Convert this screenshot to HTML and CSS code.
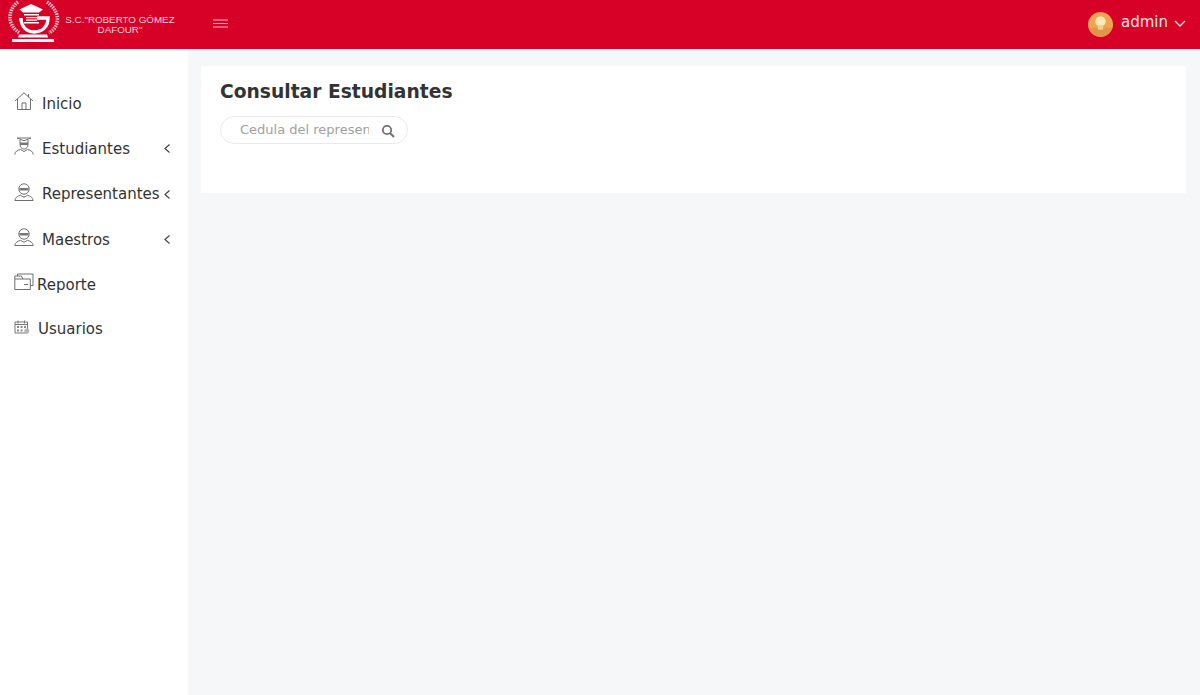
FILE: index.html
```html
<!DOCTYPE html>
<html lang="es">
<head>
<meta charset="utf-8">
<title>Consultar Estudiantes</title>
<link rel="stylesheet" href="styles.css">
</head>
<body>
<header class="topbar">
  <div class="brand">
    <svg class="logo" viewBox="7 0 54 44" width="54" height="44" aria-hidden="true">
      <g fill="none" stroke="#f0c4cc" stroke-width="3.600" stroke-dasharray="1.500 1">
        <path d="M18 2C8 9 6 25 20 33"/>
        <path d="M47 2C59 10 62 25 49 33"/>
      </g>
      <path fill="#fff" d="M31 4 43 9.500 39 12.500H23L19.500 9.500z"/>
      <path fill="#fff" d="M24 14h15v1.500H24zM26 17h11v1.300H26zM26 19.500h11v1.300H26zM24 22h15v1.500H24z"/>
      <path fill="none" stroke="#fff" stroke-width="3.400" d="M21 18C21 27 27 32 34 32 42 32 48 27 48 18H37"/>
      <path fill="#fff" d="M19 34.500H47L48 37.500H18zM12 39H54V42H12z"/>
    </svg>
    <div class="brand-name">S.C."ROBERTO GÓMEZ<br>DAFOUR"</div>
    <svg class="burger" viewBox="0 0 15 9" width="15" height="9" aria-hidden="true">
      <path d="M0 1h15M0 4.500h15M0 8h15" stroke="#f4b5c0" stroke-width="1" fill="none"/>
    </svg>
  </div>
  <div class="user">
    <svg class="avatar" viewBox="0 0 24 24" width="25" height="25" aria-hidden="true">
      <circle cx="12" cy="12" r="12" fill="#f0a552"/>
      <path d="M0.500 15h23A12 12 0 0 1 .5 15z" fill="#e8934a"/>
      <circle cx="12" cy="9" r="5" fill="#fbeab4"/>
      <rect x="9.500" y="12.500" width="5" height="4.500" fill="#f2d08e"/>
    </svg>
    <span class="user-name">admin</span>
    <svg class="caret" viewBox="0 0 12 7" width="12" height="7" aria-hidden="true">
      <path d="M1 1l5 5 5-5" fill="none" stroke="#fbdde2" stroke-width="1.300"/>
    </svg>
  </div>
</header>
<div class="body-row">
  <nav class="sidebar">
    <a class="nav-item">
      <svg class="nav-icon" viewBox="0 0 20 18" aria-hidden="true"><path d="M1 9 10 .8 19 9M3.500 7V17.500h13V7M8 17.500V11h4v6.500M14.500 2v3.200" fill="none" stroke="#6f6f6f" stroke-width="1"/></svg>
      <span class="nav-label">Inicio</span>
    </a>
    <a class="nav-item">
      <svg class="nav-icon" viewBox="0 0 20 18" aria-hidden="true"><path d="M3 1h14l-7 2.800zM6 3v4.500c0 3 2 4.500 4 4.500s4-1.500 4-4.500V3M.8 17.500c0-3 3-4.500 5.700-5l3.500 2 3.500-2c2.700.5 5.700 2 5.700 5" fill="none" stroke="#707070" stroke-width="1"/><path d="M6 5.500h8v2.500H6z" fill="#777"/></svg>
      <span class="nav-label">Estudiantes</span>
      <svg class="chev" viewBox="0 0 6 9" aria-hidden="true"><path d="M5.500.5 1 4.500l4.500 4" fill="none" stroke="#444" stroke-width="1.200"/></svg>
    </a>
    <a class="nav-item">
      <svg class="nav-icon" viewBox="0 0 20 18" aria-hidden="true"><circle cx="10" cy="6" r="5.200" fill="none" stroke="#707070"/><path d="M.8 17.500c.3-3 3-4.500 5.700-5.200l3.500 2 3.500-2c2.700.7 5.400 2.200 5.700 5.200z" fill="none" stroke="#707070"/><path d="M5.500 5h9v2.500h-9z" fill="#777"/></svg>
      <span class="nav-label">Representantes</span>
      <svg class="chev" viewBox="0 0 6 9" aria-hidden="true"><path d="M5.500.5 1 4.500l4.500 4" fill="none" stroke="#444" stroke-width="1.200"/></svg>
    </a>
    <a class="nav-item">
      <svg class="nav-icon" viewBox="0 0 20 18" aria-hidden="true"><circle cx="10" cy="6" r="5.200" fill="none" stroke="#707070"/><path d="M.8 17.500c.3-3 3-4.500 5.700-5.200l3.500 2 3.500-2c2.700.7 5.400 2.200 5.700 5.200z" fill="none" stroke="#707070"/><path d="M5.500 5h9v2.500h-9z" fill="#777"/></svg>
      <span class="nav-label">Maestros</span>
      <svg class="chev" viewBox="0 0 6 9" aria-hidden="true"><path d="M5.500.5 1 4.500l4.500 4" fill="none" stroke="#444" stroke-width="1.200"/></svg>
    </a>
    <a class="nav-item nav-tight">
      <svg class="nav-icon" viewBox="0 0 20 18" aria-hidden="true"><path d="M.8 16.500V6h15.500v10.500zM.8 6V3h6.500l1.500 3M3.500 3V1H19v11.500h-2.700M10 11.500h4" fill="none" stroke="#6f6f6f"/></svg>
      <span class="nav-label">Reporte</span>
    </a>
    <a class="nav-item nav-users">
      <svg class="nav-icon nav-icon-small" viewBox="0 0 16 14" aria-hidden="true"><path d="M1 2h12.500v11H1zM1 4.500h12.500M4 .5v3M10.500.5v3" fill="none" stroke="#777"/><path d="M3 6h2v2H3zM6.500 6h2v2h-2zM10 6h2v2h-2zM3 9.500h2v2H3zM6.500 9.500h2v2h-2z" fill="#8a8a8a"/><circle cx="12.800" cy="11" r="2.500" fill="#b5b5b5"/></svg>
      <span class="nav-label">Usuarios</span>
    </a>
  </nav>
  <main class="content">
    <section class="card">
      <h1 class="title">Consultar Estudiantes</h1>
      <div class="search">
        <input class="search-input" type="text" placeholder="Cedula del representante">
        <svg class="search-icon" viewBox="0 0 14 14" width="14" height="14" aria-hidden="true"><circle cx="6" cy="6" r="4.200" fill="none" stroke="#707070" stroke-width="1.800"/><path d="M9 9l4 4" stroke="#707070" stroke-width="2"/></svg>
      </div>
    </section>
  </main>
</div>
</body>
</html>
```
FILE: styles.css
```css
* { box-sizing: border-box; }
html, body { margin: 0; height: 100%; overflow: hidden; }
body {
  font-family: "DejaVu Sans", sans-serif;
  background: #f6f7f9;
  color: #333;
  display: flex;
  flex-direction: column;
  height: 695px;
}
.topbar {
  height: 49px;
  flex: none;
  background: #d70026;
  display: flex;
  align-items: center;
  justify-content: space-between;
  padding: 0 14px 0 7px;
}
.brand { display: flex; align-items: center; height: 100%; }
.logo { flex: none; margin-bottom: 5px; }
.brand-name {
  font-family: "Liberation Sans", sans-serif;
  font-size: 9.800px;
  line-height: 9.500px;
  color: #f7d5db;
  text-align: center;
  width: 112px;
  margin-left: 3px;
  white-space: nowrap;
}
.burger { margin-left: 37px; margin-bottom: 3px; flex: none; }
.user { display: flex; align-items: center; margin-bottom: 4px; }
.avatar { flex: none; margin-top: 4px; }
.user-name { font-size: 15px; color: #fde3e7; margin-left: 8px; margin-top: -2px; }
.caret { margin-left: 6px; margin-top: 2px; }
.body-row { flex: 1; display: flex; min-height: 0; }
.sidebar {
  width: 188px;
  flex: none;
  background: #fff;
  padding-top: 32px;
  display: flex;
  flex-direction: column;
}
.nav-item {
  height: 45.300px;
  display: flex;
  align-items: center;
  padding-left: 14px;
  padding-right: 18px;
  color: #333;
  font-size: 15px;
}
.nav-icon { width: 20px; height: 18px; flex: none; margin-right: 8px; margin-top: -5px; }
.nav-tight .nav-icon { margin-right: 3px; }
.nav-users { height: 44px; }
.nav-icon-small { width: 16px; height: 14px; margin-right: 8px; }
.nav-label { flex: 1; white-space: nowrap; }
.chev { width: 6px; height: 9px; flex: none; margin-left: 2px; }
.content { flex: 1; min-width: 0; padding: 17px 14px 0 13px; }
.card { background: #fff; height: 127px; padding: 15px 19px; }
.title { margin: 0; font-size: 18.700px; line-height: 22px; font-weight: 700; color: #333; }
.search {
  margin-top: 14px;
  width: 188px;
  height: 28px;
  border: 1px solid #e8eaec;
  border-radius: 14px;
  display: flex;
  align-items: center;
  padding: 0 12px 0 19px;
  margin-top: 13px;
}
.search-input {
  border: 0;
  outline: 0;
  padding: 0 0 2px;
  min-width: 0;
  flex: 1;
  font: 13px "DejaVu Sans", sans-serif;
  color: #333;
  background: transparent;
}
.search-input::placeholder { color: #a0a0a0; opacity: 1; }
.search-icon { flex: none; margin-left: 12px; margin-top: 2px; }
```
